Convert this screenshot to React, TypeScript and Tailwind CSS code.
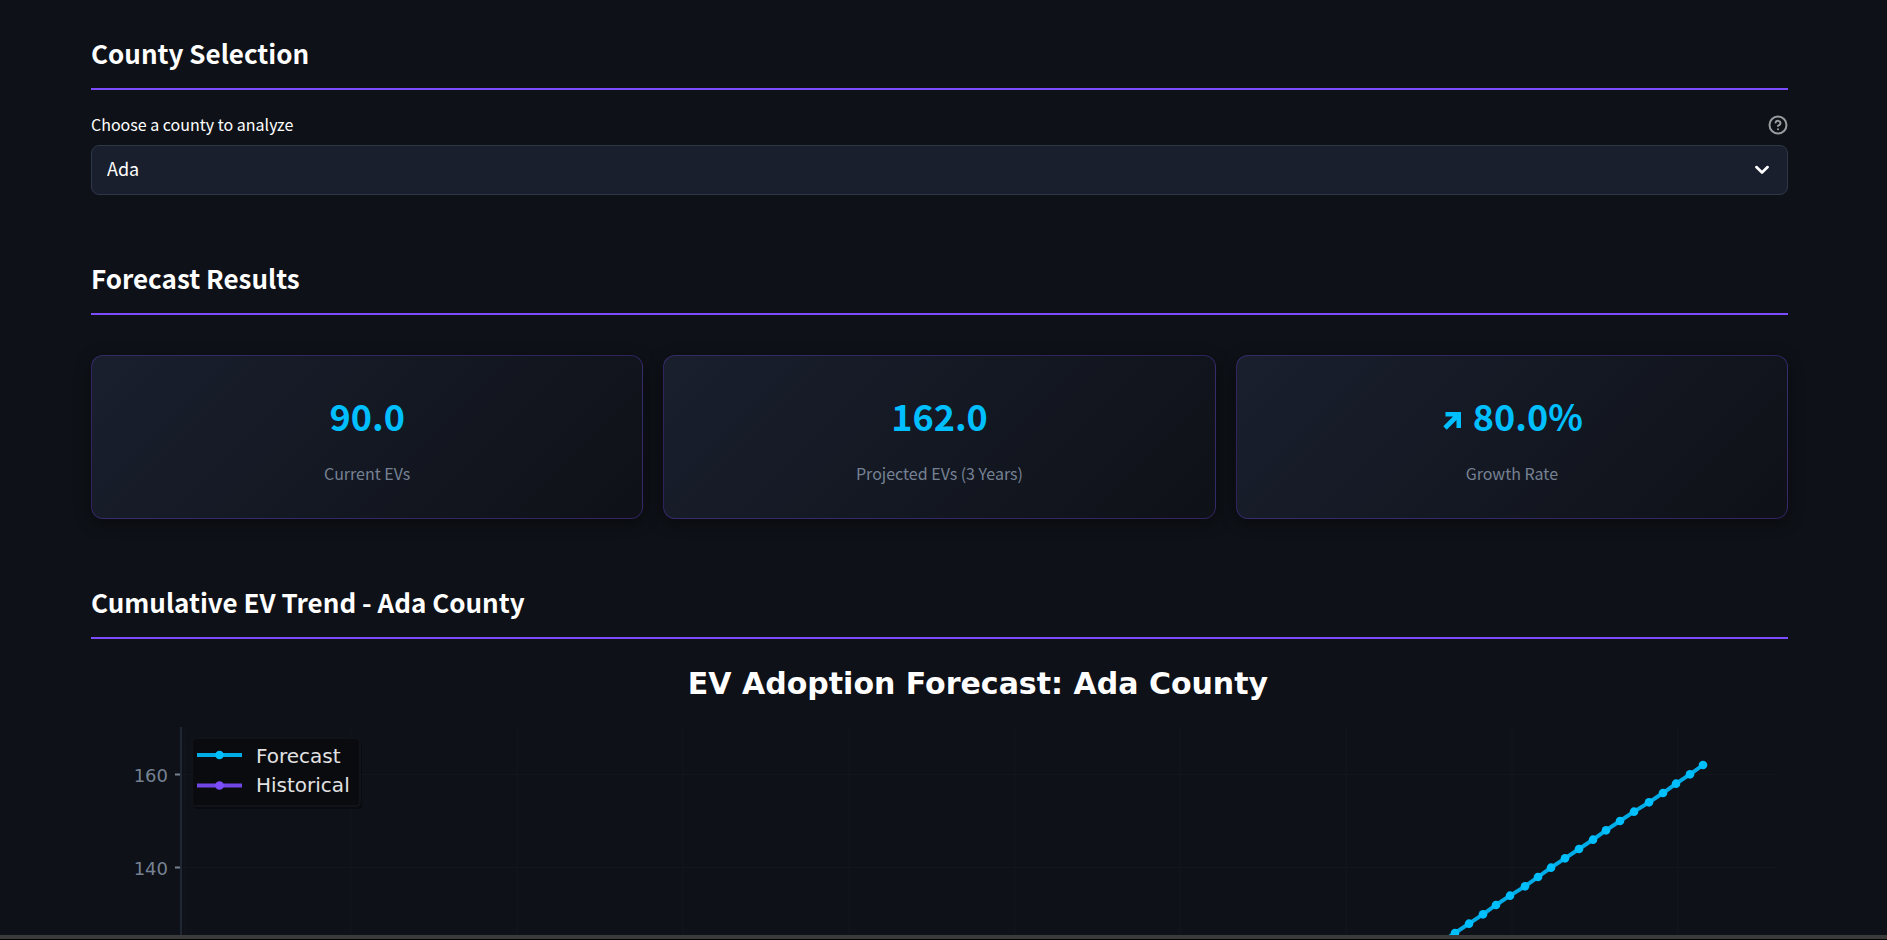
import React from "react";

const months = [1703, 1690, 1676, 1663, 1649, 1634, 1620, 1606, 1593, 1579, 1565, 1551, 1538, 1525, 1510, 1496, 1483, 1469, 1455, 1441];
const points = months.map((x, i) => ({ x: x - 91, y: 765 - 639 + (i * 28) / 3 }));
const gridX = [185, 351, 517, 683, 849, 1015, 1180, 1346, 1512, 1678].map((x) => x - 91);

function SectionTitle({ children }: { children: React.ReactNode }) {
  return (
    <h2 className="border-b-2 border-[#7c4dff] pb-[18px] text-[26px] leading-[34px] font-bold text-white">{children}</h2>
  );
}

function MetricCard({ value, label, rising = false }: { value: string; label: string; rising?: boolean }) {
  return (
    <div className="flex h-[164px] flex-col items-center rounded-xl border border-[#7c4dff]/30 bg-[linear-gradient(135deg,#1a1f2e_0%,#0e1117_100%)] pt-[33px] shadow-[0_4px_16px_rgba(0,0,0,0.4)]">
      <p className="flex items-center gap-3 text-[36px] leading-[52px] font-bold text-[#00bfff]">
        {rising && (
          <svg className="mt-3 ml-0.5 size-[18px]" viewBox="0 0 18 18" fill="currentColor" aria-hidden="true">
            <path d="M2.500 0H18V16H13.500V8L3.700 17.700L0.300 14.300L10 4.500H2.500Z" />
          </svg>
        )}
        {value}
      </p>
      <p className="mt-5 text-base leading-6 text-[#768294]">{label}</p>
    </div>
  );
}

function ForecastChart() {
  return (
    <svg className="block w-full" viewBox="0 0 1697 300" role="img" aria-label="EV adoption forecast">
      <g stroke="#12171e" strokeWidth="1">
        {gridX.map((x) => (
          <path key={x} d={`M${x} 88V300`} />
        ))}
        <path d="M90 135.500H1685M90 228.500H1685" />
      </g>
      <path d="M90 88V300" stroke="#1f2733" strokeWidth="2" />
      <path d="M84 135.500H89M84 228.500H89" stroke="#768294" strokeWidth="2" />
      <g fontFamily="'DejaVu Sans', sans-serif">
        <text x="887" y="55" fontSize="30" fontWeight="bold" fill="#fff" textAnchor="middle">EV Adoption Forecast: Ada County</text>
        <g fontSize="18" fill="#768294" textAnchor="end">
          <text x="77" y="143">160</text>
          <text x="77" y="236">140</text>
        </g>
        <rect x="103" y="102" width="168" height="68" rx="4" fill="#090b0e" />
        <rect x="101" y="99" width="168" height="68" rx="4" fill="#0a0b0f" stroke="#10141a" strokeWidth="2" />
        <path d="M106 116H151" stroke="#00ace6" strokeWidth="4" />
        <circle cx="128.500" cy="116" r="4.300" fill="#00bfff" />
        <path d="M106 146.500H151" stroke="#7047e6" strokeWidth="4" />
        <circle cx="128.500" cy="146.500" r="4.300" fill="#7c4dff" />
        <g fontSize="20" fill="#e2e2e3">
          <text x="165" y="124">Forecast</text>
          <text x="165" y="153">Historical</text>
        </g>
      </g>
      <polyline points={points.map((p) => `${p.x},${p.y}`).join(" ")} fill="none" stroke="#00ace6" strokeWidth="4" />
      {points.map((p) => (
        <circle key={p.x} cx={p.x} cy={p.y} r="4.300" fill="#00bfff" />
      ))}
    </svg>
  );
}

export default function App() {
  return (
    <div className="flex h-screen flex-col overflow-hidden bg-[#0e1117] font-['Noto_Sans_CJK_SC',sans-serif]">
      <main className="min-h-0 flex-1 overflow-hidden pt-9 pr-[99px] pl-[91px]">
        <section>
          <SectionTitle>County Selection</SectionTitle>
          <div className="mt-[23px] flex h-6 items-center justify-between">
            <label htmlFor="county" className="pb-0.5 text-base leading-6 text-white">Choose a county to analyze</label>
            <button type="button" aria-label="Help" className="text-[#9b9ca0]">
              <svg className="size-5" viewBox="0 0 24 24" fill="none" stroke="currentColor" strokeWidth="2.400" strokeLinecap="round" strokeLinejoin="round">
                <circle cx="12" cy="12" r="10.200" />
                <path d="M9.090 9a3 3 0 0 1 5.830 1c0 2-3 3-3 3M12 17h.010" />
              </svg>
            </button>
          </div>
          <div className="relative mt-2">
            <select id="county" className="block h-[50px] w-full appearance-none rounded-lg border border-[#2d3748] bg-[#1a1f2e] px-[15px] pb-1 text-lg text-white">
              <option>Ada</option>
            </select>
            <svg className="pointer-events-none absolute top-[18px] right-[19px] size-3.5" viewBox="0 0 12 12" fill="none" stroke="#fff" strokeWidth="2.300" strokeLinecap="round" strokeLinejoin="round" aria-hidden="true">
              <path d="M1.200 3.500L6 8.200L10.800 3.500" />
            </svg>
          </div>
        </section>
        <section className="mt-[66px]">
          <SectionTitle>Forecast Results</SectionTitle>
          <div className="mt-10 grid grid-cols-3 gap-5">
            <MetricCard value="90.0" label="Current EVs" />
            <MetricCard value="162.0" label="Projected EVs (3 Years)" />
            <MetricCard value="80.0%" label="Growth Rate" rising />
          </div>
        </section>
        <section className="mt-[66px]">
          <SectionTitle>Cumulative EV Trend - Ada County</SectionTitle>
          <ForecastChart />
        </section>
      </main>
      <footer className="h-[5px] shrink-0 border-b border-black bg-[#3b3b3b]" />
    </div>
  );
}
